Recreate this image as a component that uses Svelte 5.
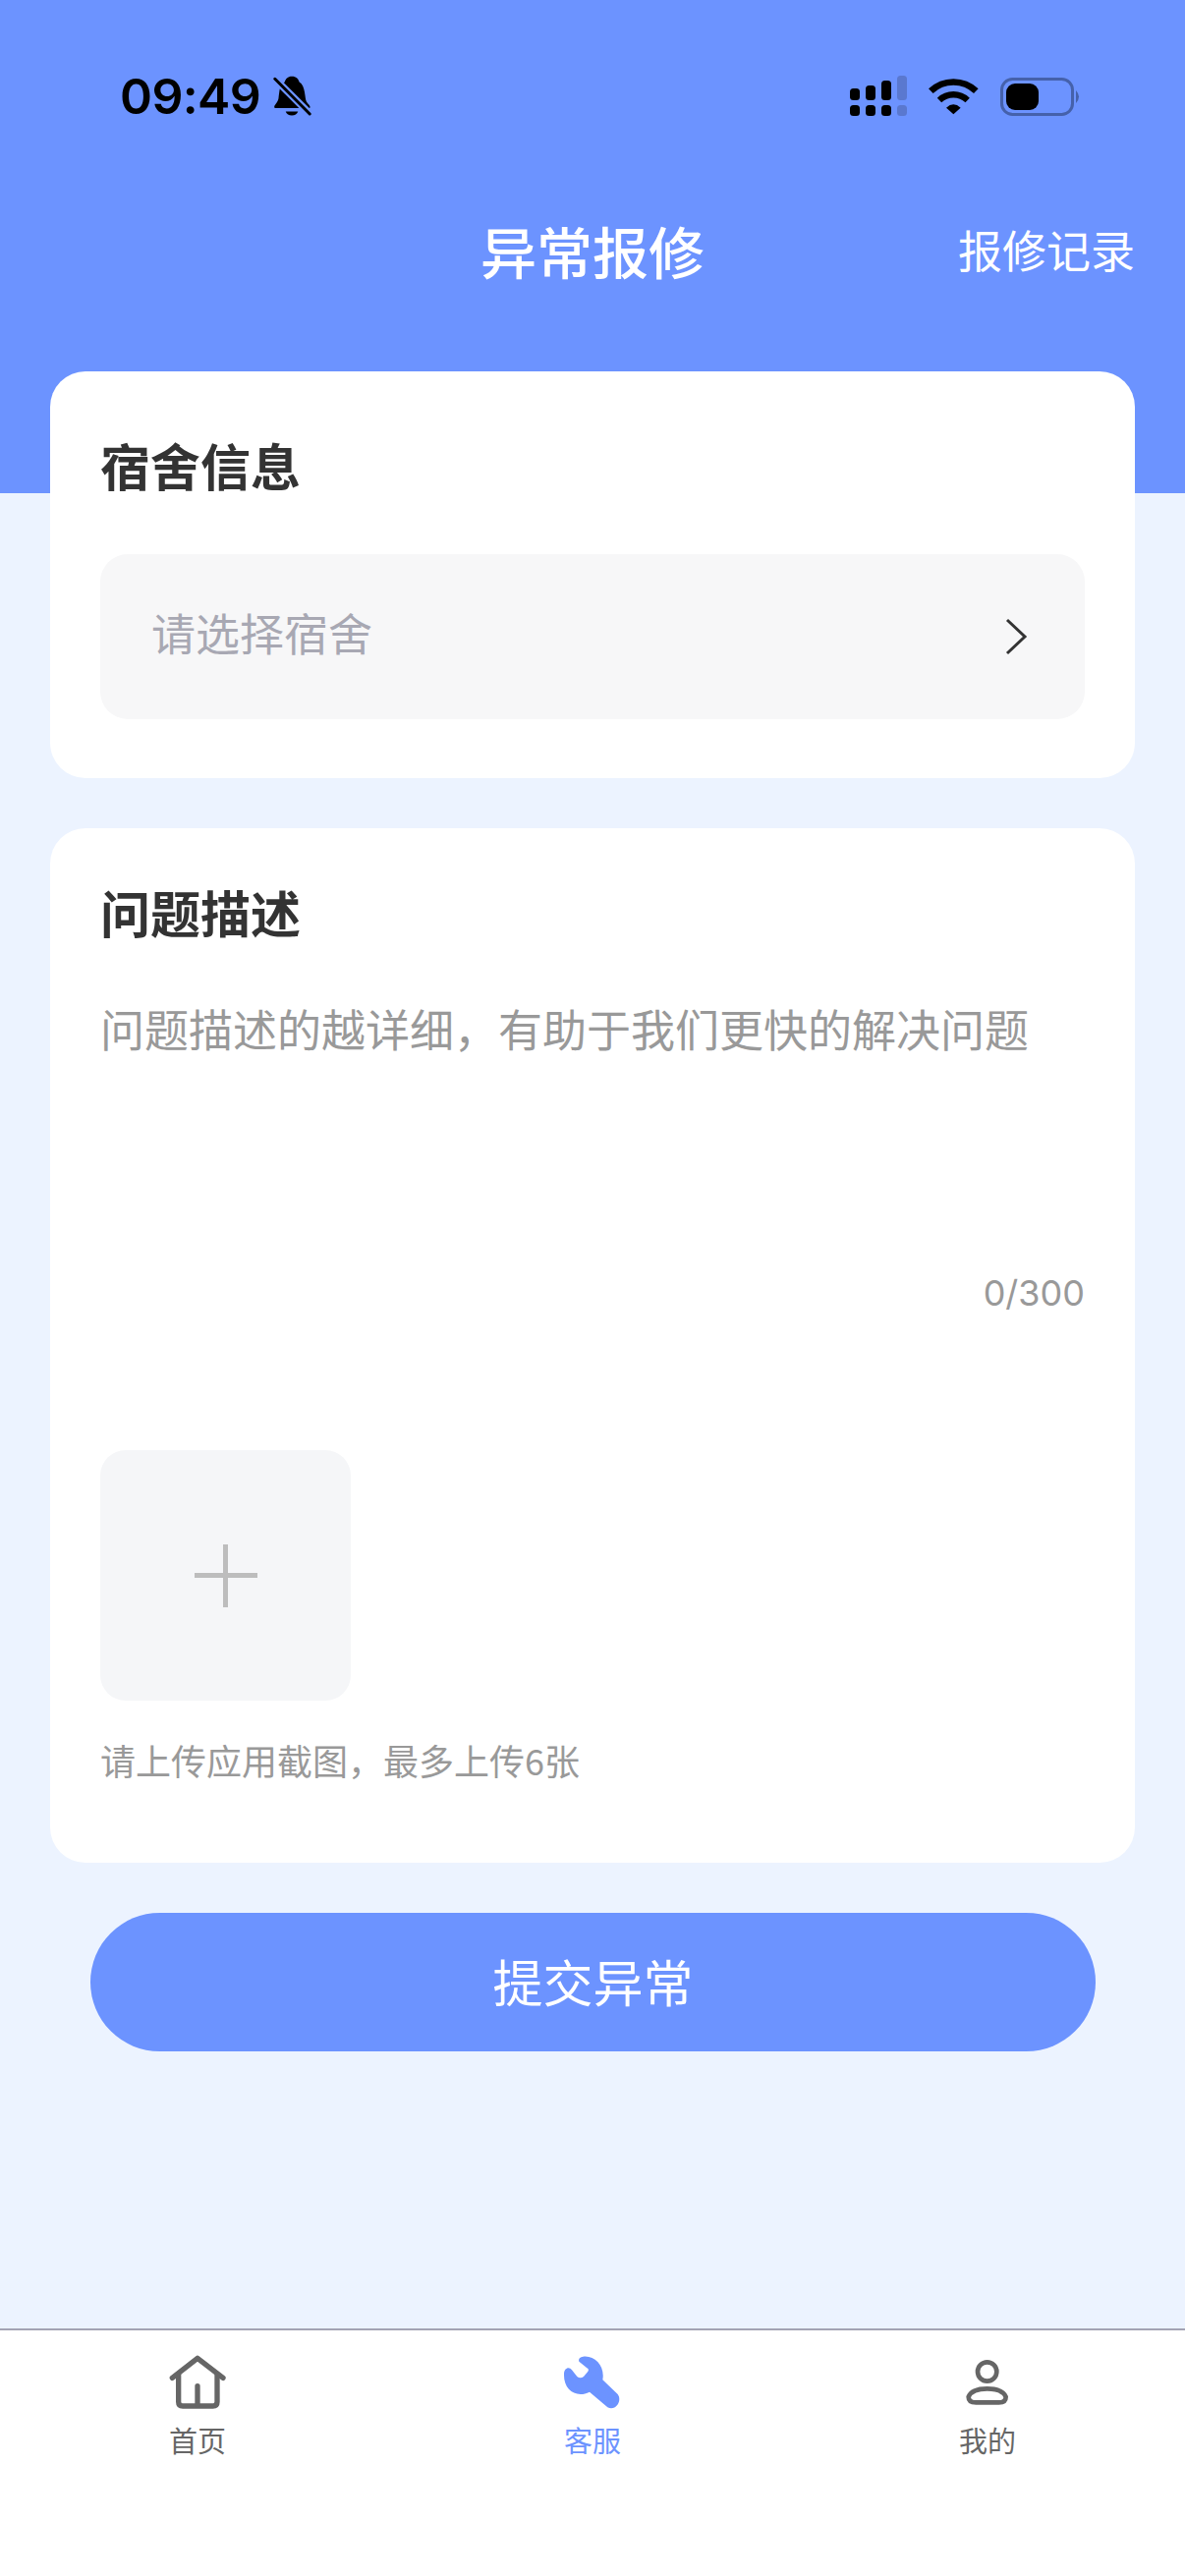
<script>
  const tabs = [
    { label: '首页', view: '33 40 240 180' },
    { label: '客服', view: '39 40 240 180', active: true },
    { label: '我的', view: '45 40 240 180' },
  ];
</script>

<div class="page">
  <header class="top">
    <div class="status">
      <div class="clock">
        <span class="time">09:49</span>
        <svg class="bell" viewBox="540 80 120 130">
          <path d="M597 82C610 82 618 90 620 100C640 112 636 150 642 160C648 170 656 172 652 180L545 180C538 172 552 168 556 150C560 125 558 110 575 100C577 90 585 82 597 82Z" />
          <path d="M578 190A20 18 0 0 0 616 190Z" />
          <path class="gap" d="M535 80L660 205" />
          <path class="slash" d="M545 90L652 198" />
        </svg>
      </div>
      <div class="sys">
        <svg class="signal" viewBox="0 0 59 42">
          <rect x="0" y="13" width="10" height="12" rx="3.5" />
          <rect x="16" y="10" width="10" height="15" rx="3.5" />
          <rect x="32" y="5" width="10" height="20" rx="3.5" />
          <rect class="dim" x="48" y="0" width="10" height="25" rx="3.5" />
          <rect x="0" y="30" width="10" height="11" rx="3.5" />
          <rect x="16" y="30" width="10" height="11" rx="3.5" />
          <rect x="32" y="30" width="10" height="11" rx="3.5" />
          <rect class="dim" x="48" y="30" width="10" height="11" rx="3.5" />
        </svg>
        <svg class="wifi" viewBox="315 86 153 114">
          <path class="arc a1" d="M322 127A100 100 0 0 1 460 127" />
          <path class="arc a2" d="M348 155A62 62 0 0 1 434 155" />
          <path d="M369 178Q391 158 413 178L391 198Z" />
        </svg>
        <svg class="battery" viewBox="0 0 82 39">
          <rect class="shell" x="1.5" y="1.5" width="72" height="36" rx="11" />
          <rect x="6" y="6" width="33" height="27" rx="9" />
          <path class="nub" d="M77 13Q83 19.500 77 26Z" />
        </svg>
      </div>
    </div>
    <div class="nav">
      <span></span>
      <h1>异常报修</h1>
      <a class="records" href="#records">报修记录</a>
    </div>
  </header>

  <main class="content">
    <section class="card first">
      <h2>宿舍信息</h2>
      <div class="picker">
        <span>请选择宿舍</span>
        <svg class="chevron" viewBox="0 0 24 38"><path d="M3 2L21 19L3 36" /></svg>
      </div>
    </section>

    <section class="card second">
      <h2>问题描述</h2>
      <div class="desc">问题描述的越详细，有助于我们更快的解决问题</div>
      <div class="count">0/300</div>
      <div class="upload"><span class="plus"></span></div>
      <p class="hint">请上传应用截图，最多上传6张</p>
    </section>

    <button class="submit">提交异常</button>
  </main>

  <nav class="tabbar">
    {#each tabs as t, i}
      <div class="tab" class:active={t.active}>
        <svg viewBox={t.view} class="tab-icon">
          {#if i === 0}
            <path class="line" d="M76 122L153 62L231 122" />
            <path class="line" d="M95 112V195Q95 208 108 208H200Q213 208 213 195V112" />
            <path class="line" d="M153 147V204" />
          {:else if i === 1}
            <path class="fill" d="M118 72Q114 60 130 57C165 52 198 85 190 128L236 172C250 190 232 224 205 212L150 165C110 185 70 160 72 110C72 92 88 86 96 98L112 118Q122 126 132 118L144 104Q150 96 142 92Z" />
          {:else}
            <circle class="line thin" cx="164" cy="103" r="29" />
            <path class="line thin" d="M130 197H200Q221 197 221 180C215 165 195 155 164 155C133 155 113 165 107 180Q107 197 130 197Z" />
          {/if}
        </svg>
        <span>{t.label}</span>
      </div>
    {/each}
  </nav>
</div>

<style>
  :global(body) {
    margin: 0;
    background: #ecf3ff;
  }

  .page {
    width: 1206px;
    height: 2622px;
    display: flex;
    flex-direction: column;
    font-family: "Noto Sans CJK SC", "Noto Sans", sans-serif;
    background: #ecf3ff;
    overflow: hidden;
  }

  .top {
    height: 502px;
    flex: none;
    background: #6c93ff;
  }

  .status {
    height: 196px;
    box-sizing: border-box;
    padding: 0 106px 0 122px;
    display: flex;
    align-items: center;
    justify-content: space-between;
  }

  .clock {
    display: flex;
    align-items: center;
    gap: 13px;
  }

  .time {
    font-family: Inter, "Liberation Sans", sans-serif;
    font-size: 50px;
    font-weight: 600;
    letter-spacing: -0.6px;
    line-height: 60px;
    color: #000;
  }

  .bell {
    width: 40px;
    height: 43px;
    fill: #000;
  }
  .bell .gap {
    fill: none;
    stroke: #6c93ff;
    stroke-width: 22;
  }
  .bell .slash {
    fill: none;
    stroke: #000;
    stroke-width: 9;
    stroke-linecap: round;
  }

  .sys {
    display: flex;
    align-items: center;
  }

  .signal {
    width: 59px;
    height: 42px;
    fill: #000;
    margin-right: 21px;
  }
  .signal .dim {
    fill: #5a78cf;
  }

  .wifi {
    width: 51px;
    height: 38px;
    fill: #000;
    margin-right: 22px;
  }
  .wifi .arc {
    fill: none;
    stroke: #000;
  }
  .wifi .a1 { stroke-width: 20; }
  .wifi .a2 { stroke-width: 19; }

  .battery {
    width: 82px;
    height: 39px;
    fill: #000;
  }
  .battery .shell {
    fill: none;
    stroke: #4561ab;
    stroke-width: 3;
  }
  .battery .nub {
    fill: #4561ab;
  }

  .nav {
    height: 122px;
    padding: 0 51px;
    display: grid;
    grid-template-columns: 1fr auto 1fr;
    align-items: center;
    color: #fff;
  }

  h1 {
    margin: -6px 0 0;
    font-size: 57px;
    font-weight: 500;
    line-height: 80px;
  }

  .records {
    justify-self: end;
    margin-top: -6px;
    color: #fff;
    font-size: 45px;
    line-height: 60px;
    text-decoration: none;
  }

  .content {
    flex: 1;
    margin-top: -124px;
    padding: 0 51px;
    display: flex;
    flex-direction: column;
  }

  .card {
    background: #fff;
    border-radius: 36px;
    padding: 0 51px;
  }
  .card.first {
    height: 414px;
    box-sizing: border-box;
    padding-top: 59px;
  }
  .card.second {
    margin-top: 51px;
    padding-top: 49px;
    padding-bottom: 80px;
  }

  h2 {
    margin: 0;
    font-size: 51px;
    font-weight: 600;
    line-height: 72px;
    color: #333;
  }

  .card.first .picker {
    margin-top: 55px;
  }

  .picker {
    height: 168px;
    padding: 0 58px 0 52px;
    display: flex;
    align-items: center;
    justify-content: space-between;
    background: #f7f7f8;
    border-radius: 28px;
    font-size: 45px;
    color: #a8a8b3;
  }
  .picker span {
    margin-top: -9px;
  }

  .chevron {
    width: 24px;
    height: 38px;
    fill: none;
    stroke: #333;
    stroke-width: 3;
  }

  .desc {
    margin-top: 53px;
    height: 279px;
    font-size: 45px;
    line-height: 60px;
    color: #999;
  }

  .count {
    text-align: right;
    font-family: Inter, "Noto Sans", sans-serif;
    font-size: 36px;
    line-height: 40px;
    color: #999;
  }

  .upload {
    width: 255px;
    height: 255px;
    margin-top: 140px;
    display: flex;
    align-items: center;
    justify-content: center;
    background: #f5f6f8;
    border-radius: 26px;
  }

  .plus {
    width: 64px;
    height: 64px;
    background:
      linear-gradient(#bdbdbd, #bdbdbd) center / 5px 100% no-repeat,
      linear-gradient(#bdbdbd, #bdbdbd) center / 100% 5px no-repeat;
  }

  .hint {
    margin: 35px 0 0;
    font-size: 36px;
    line-height: 50px;
    color: #999;
  }

  .submit {
    height: 141px;
    margin: 51px 40px 0 41px;
    padding: 0 0 3px;
    border: 0;
    border-radius: 71px;
    background: #6c93ff;
    color: #fff;
    font-family: inherit;
    font-size: 51px;
  }

  .tabbar {
    height: 252px;
    flex: none;
    box-sizing: border-box;
    padding-top: 21px;
    display: grid;
    grid-template-columns: repeat(3, 1fr);
    align-items: start;
    border-top: 2px solid #a3a3b3;
    background: #fff;
  }

  .tab {
    display: flex;
    flex-direction: column;
    align-items: center;
    font-size: 29px;
    line-height: 40px;
    color: #666;
  }
  .tab.active {
    color: #6c93ff;
  }

  .tab-icon {
    width: 80px;
    height: 60px;
    margin-bottom: 10px;
  }
  .tab-icon .line {
    fill: none;
    stroke: #666;
    stroke-width: 16;
    stroke-linecap: round;
    stroke-linejoin: round;
  }
  .tab-icon .thin {
    stroke-width: 14;
  }
  .tab-icon .fill {
    fill: #6c93ff;
  }
</style>
